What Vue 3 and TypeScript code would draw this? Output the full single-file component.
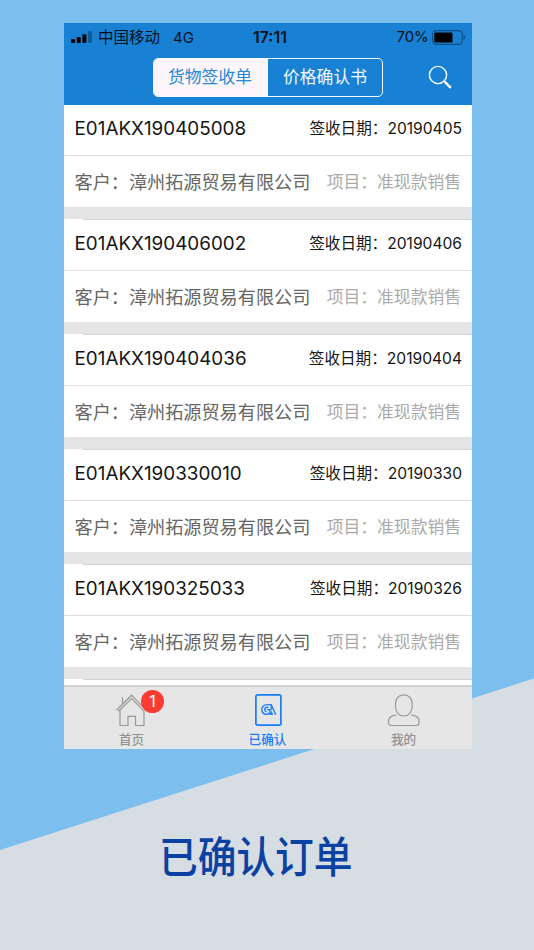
<script setup lang="ts">
interface Order {
  code: string
  date: string
}

const customer = '漳州拓源贸易有限公司'
const project = '准现款销售'
const orders: Order[] = [
  { code: 'E01AKX190405008', date: '20190405' },
  { code: 'E01AKX190406002', date: '20190406' },
  { code: 'E01AKX190404036', date: '20190404' },
  { code: 'E01AKX190330010', date: '20190330' },
  { code: 'E01AKX190325033', date: '20190326' },
]
</script>

<template>
  <main class="poster">
    <section class="phone">
      <header class="top">
        <div class="status">
          <svg class="signal" width="21" height="12" viewBox="0 0 21 12">
            <rect x="0" y="8" width="4" height="4" rx="1" />
            <rect x="5.7" y="6" width="4" height="6" rx="1" />
            <rect x="11.4" y="3.3" width="4" height="8.7" rx="1" />
            <rect x="17" y="0" width="4" height="12" rx="1" opacity=".3" />
          </svg>
          <span class="carrier">中国移动</span>
          <span class="network">4G</span>
          <span class="time">17:11</span>
          <span class="percent">70%</span>
          <svg class="battery" width="34" height="15" viewBox="0 0 34 15">
            <rect x=".6" y=".6" width="29.6" height="13.8" rx="3.6" fill="none" stroke="#000" stroke-opacity=".4" stroke-width="1.1" />
            <rect x="2.3" y="2.6" width="18.2" height="9.8" rx="1.2" />
            <path d="M31.5 5v5c2-.7 2-4.3 0-5z" opacity=".4" />
          </svg>
        </div>
        <nav class="bar">
          <div class="segments">
            <span class="segment active">货物签收单</span>
            <span class="segment">价格确认书</span>
          </div>
          <svg class="search" width="25" height="25" viewBox="0 0 25 25" fill="none" stroke="#fff">
            <circle cx="10" cy="10" r="8.6" stroke-width="1.4" />
            <path d="M16 16l1.5 1.5" stroke-width="1.5" />
            <path d="M16.8 16.8l6 6" stroke-width="2.4" />
          </svg>
        </nav>
      </header>

      <div class="list">
        <article v-for="order in orders" :key="order.code" class="order">
          <div class="head">
            <span class="code">{{ order.code }}</span>
            <span class="date"><span class="label">签收日期：</span><span class="digits">{{ order.date }}</span></span>
          </div>
          <div class="detail">
            <span class="customer">客户：{{ customer }}</span>
            <span class="project">项目：{{ project }}</span>
          </div>
          <div class="gap"></div>
        </article>
      </div>

      <footer class="tabs">
        <div class="tab">
          <span class="icon">
            <svg width="34" height="34" viewBox="0 0 34 34" fill="none" stroke="#999" stroke-width="1.2">
              <path d="M1.4 17.3L16.600 2.200l14 14.600M3.400 18.300L16.600 5.600l12.400 12.600M7.500 12V4.200M5 17.200v15.300h8v-9.200h7.500v9.200h8.500V17.500" />
            </svg>
            <span class="badge">1</span>
          </span>
          <span class="name">首页</span>
        </div>
        <div class="tab current">
          <span class="icon">
            <svg width="34" height="34" viewBox="0 0 34 34" fill="none" stroke="#1b7df5">
              <rect x="4.9" y="1.9" width="25" height="30.2" rx="1.8" stroke-width="1.7" />
              <g stroke-width="1.4">
                <path d="M17.8 11.6h-1.600c-3.300 0-5.400 2.100-5.400 5s2.100 4.800 5 4.800c2.300 0 3.200-1.600 3.200-4.800h-3" />
                <path d="M17.500 14.200h-1.300c-3 0-3.200 4.300-.6 4.500" />
                <path d="M17.500 11.600h2.700l4.600 10.200M20.200 12v5" />
              </g>
              <path d="M18.300 22l2.200-4.500 1.800 4.500z" fill="#1b7df5" stroke="none" />
            </svg>
          </span>
          <span class="name">已确认</span>
        </div>
        <div class="tab">
          <span class="icon">
            <svg width="34" height="34" viewBox="0 0 34 34" fill="none" stroke="#999" stroke-width="1.2">
              <path d="M16.800 1.900c5 0 8.300 3.400 8.300 8.500v3.400c0 5-3.600 9.200-8.300 9.200s-8.300-4.200-8.300-9.200v-3.400c0-5.100 3.300-8.500 8.300-8.500z" />
              <path d="M9.300 22.200C4.300 22.700 1.500 24 1.500 28v1.500c0 2 1.300 3 3.300 3h24c2 0 3.300-1 3.300-3V28c0-4-2.800-5.300-7.800-5.800" />
            </svg>
          </span>
          <span class="name">我的</span>
        </div>
      </footer>
    </section>
    <h1 class="caption">已确认订单</h1>
  </main>
</template>

<style>
body {
  margin: 0;
}
</style>

<style scoped>
.poster {
  box-sizing: border-box;
  width: 534px;
  height: 950px;
  padding: 23px 0 0 64px;
  overflow: hidden;
  background: #7cbfef;
  font-family: Inter, "Noto Sans CJK SC", sans-serif;
  position: relative;
  z-index: 0;
}

.poster::before {
  content: "";
  position: absolute;
  inset: 0;
  z-index: -1;
  background: #d6dde3;
  clip-path: polygon(0 850px, 534px 678.5px, 534px 950px, 0 950px);
}

.phone {
  display: flex;
  flex-direction: column;
  width: 408px;
  height: 725.5px;
  overflow: hidden;
  background: #fff;
}

.top {
  flex: none;
  height: 82px;
  background: #1981d4;
}

.status {
  display: grid;
  grid-template-columns: 21px 75px 86px 143.5px 35.5px 34px;
  align-items: center;
  height: 27px;
  padding-left: 7px;
  color: #06121d;
  font-size: 15.5px;
  line-height: 27px;
  white-space: nowrap;
}

.carrier {
  padding-left: 6px;
}

.network {
  padding-left: 6px;
  font-size: 15px;
}

.time {
  font-weight: 600;
  font-size: 15.9px;
}

.percent {
  padding-top: 1px;
  font-size: 14.9px;
}

.bar {
  display: flex;
  align-items: center;
  height: 54px;
  padding-left: 89px;
}

.segments {
  box-sizing: border-box;
  display: flex;
  width: 230px;
  height: 39px;
  overflow: hidden;
  border: 1.4px solid #f6f8fd;
  border-radius: 5px;
}

.segment {
  box-sizing: border-box;
  flex: 0 0 50%;
  color: #f4faff;
  font-size: 16.8px;
  line-height: 37px;
  text-align: center;
}

.active {
  padding-right: 2px;
  background: #fcf6fa;
  color: #2788d5;
}

.search {
  margin-left: 45px;
}

.list {
  flex: none;
  height: 580px;
  overflow: hidden;
}

.order {
  height: 115px;
}

.head,
.detail {
  box-sizing: border-box;
  display: flex;
  align-items: center;
  justify-content: space-between;
  padding: 0 10px 0 10.5px;
  white-space: nowrap;
}

.head {
  height: 51px;
  padding-bottom: 4px;
  border-bottom: 1px solid #dedede;
  color: #151515;
}

.code {
  font-size: 18.85px;
}

.date {
  display: flex;
  align-items: center;
  font-size: 15.6px;
}

.label {
  padding-bottom: 2px;
}

.detail {
  height: 51px;
  padding-bottom: 2px;
  color: #666;
}

.customer {
  font-size: 18.15px;
}

.project {
  padding-right: 1px;
  color: #aaa;
  font-size: 16.8px;
}

.gap {
  box-sizing: border-box;
  height: 13px;
  background: linear-gradient(#fff, #fff) 0 100% / 19px 1px no-repeat, linear-gradient(#d3d3d3, #d3d3d3) 0 100% / 100% 1px no-repeat, #e5e5e5;
}

.tabs {
  flex: 1;
  display: grid;
  grid-template-columns: repeat(3, 1fr);
  box-sizing: border-box;
  border-top: 2px solid #d2d2d2;
  background: #e6e6e6;
}

.tab {
  display: flex;
  flex-direction: column;
  align-items: center;
  padding-top: 6px;
  color: #929292;
  font-size: 12.6px;
}

.current {
  color: #1b7df5;
}

.icon {
  position: relative;
  width: 34px;
  height: 34px;
}

.icon svg {
  display: block;
}

.name {
  padding-right: 1px;
  margin-top: 4px;
  font-weight: 500;
  line-height: 18px;
}

.badge {
  position: absolute;
  top: -3px;
  left: 26px;
  width: 23px;
  height: 23px;
  border-radius: 50%;
  background: #fc3b30;
  color: #fff;
  font-size: 16px;
  line-height: 23px;
  text-align: center;
}

.caption {
  width: 214px;
  margin: 76px 0 0 95px;
  color: #0b41a2;
  font-size: 43px;
  font-weight: 500;
  line-height: 64px;
  white-space: nowrap;
  transform: scaleX(.9);
  transform-origin: left;
}
</style>
